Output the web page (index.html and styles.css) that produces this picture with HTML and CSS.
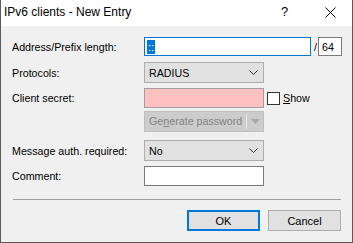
FILE: index.html
```html
<!DOCTYPE html>
<html lang="en">
<head>
    <meta charset="UTF-8">
    <title>IPv6 clients - New Entry</title>
    <link rel="stylesheet" href="styles.css">
</head>
<body>
    <div class="window">
        <div class="titlebar">
            <span class="title">IPv6 clients - New Entry</span>
            <span class="help">?</span>
            <span class="close">
                <svg width="11" height="11" viewBox="0 0 11 11"><path d="M0.5 0.5 L10.5 10.5 M10.5 0.5 L0.5 10.5" stroke="#000" stroke-width="1" fill="none"/></svg>
            </span>
        </div>

        <div class="content">
            <div class="row row-address">
                <label>Address/Prefix length:</label>
                <div class="controls">
                    <div class="textbox focused address"><span class="selected">::</span></div>
                    <span class="slash">/</span>
                    <div class="textbox prefix">64</div>
                </div>
            </div>

            <div class="row row-protocols">
                <label>Protocols:</label>
                <div class="controls">
                    <div class="combo">
                        <span>RADIUS</span>
                        <svg class="chevron" width="9" height="5" viewBox="0 0 9 5"><path d="M0.5 0.5 L4.5 4.5 L8.5 0.5" stroke="#333" fill="none"/></svg>
                    </div>
                </div>
            </div>

            <div class="row row-secret">
                <label>Client secret:</label>
                <div class="controls">
                    <div class="textbox secret"></div>
                    <span class="checkbox"></span>
                    <span class="check-label"><u>S</u>how</span>
                </div>
            </div>

            <div class="row row-generate">
                <span></span>
                <div class="controls">
                    <div class="splitbutton">
                        <span class="split-main">Ge<u>n</u>erate password</span>
                        <span class="split-arrow">
                            <svg width="9" height="6" viewBox="0 0 9 6"><path d="M0 0 L9 0 L4.5 5 Z" fill="#a8a8a8"/></svg>
                        </span>
                    </div>
                </div>
            </div>

            <div class="row row-auth">
                <label>Message auth. required:</label>
                <div class="controls">
                    <div class="combo">
                        <span>No</span>
                        <svg class="chevron" width="9" height="5" viewBox="0 0 9 5"><path d="M0.5 0.5 L4.5 4.5 L8.5 0.5" stroke="#333" fill="none"/></svg>
                    </div>
                </div>
            </div>

            <div class="row row-comment">
                <label>Comment:</label>
                <div class="controls">
                    <div class="textbox comment"></div>
                </div>
            </div>

            <div class="separator"></div>

            <div class="buttons">
                <button class="btn default">OK</button>
                <button class="btn">Cancel</button>
            </div>
        </div>
    </div>
</body>
</html>
```

FILE: styles.css
```css
html, body {
    margin: 0;
    padding: 0;
}
body {
    width: 353px;
    height: 243px;
    font-family: "Liberation Sans", Arial, sans-serif;
    font-size: 10.7px;
    color: #000;
    background: #f0f0f0;
}
.window {
    box-sizing: border-box;
    width: 353px;
    height: 243px;
    border: 1px solid #5a5a5a;
    border-top: none;
    background: #f0f0f0;
    display: flex;
    flex-direction: column;
}
.titlebar {
    height: 26px;
    background: #fff;
    display: flex;
    align-items: center;
    position: relative;
}
.title {
    font-size: 12px;
    margin-left: 3px;
    margin-top: -2px;
}
.help {
    position: absolute;
    left: 280px;
    top: 4px;
    font-size: 13px;
}
.close {
    position: absolute;
    left: 324px;
    top: 7px;
    line-height: 0;
}
.content {
    flex: 1;
    padding: 11px 0 0 11px;
}
.row {
    display: grid;
    grid-template-columns: 132px auto;
    align-items: center;
}
.controls {
    display: flex;
    align-items: center;
}
.row-address { height: 19px; }
.row-protocols { height: 21px; margin-top: 6px; }
.row-secret { height: 20px; margin-top: 5px; }
.row-generate { height: 21px; margin-top: 3px; }
.row-auth { height: 21px; margin-top: 8px; }
.row-comment { height: 20px; margin-top: 5px; }

.textbox {
    box-sizing: border-box;
    height: 19px;
    background: #fff;
    border: 1px solid #7a7a7a;
    display: flex;
    align-items: center;
    padding-left: 2px;
}
.textbox.focused {
    border-color: #0078d7;
}
.address {
    width: 167px;
}
.selected {
    background: #0078d7;
    color: #fff;
    padding: 0 1px;
    line-height: 14px;
}
.slash {
    margin: 0 1px 0 3px;
}
.prefix {
    width: 24px;
    padding-left: 3px;
}
.secret {
    width: 120px;
    height: 20px;
    background: #ffc0c0;
    border-color: #a0a0a0;
}
.comment {
    width: 120px;
    height: 20px;
}
.combo {
    box-sizing: border-box;
    width: 120px;
    height: 21px;
    background: #e1e1e1;
    border: 1px solid #adadad;
    display: flex;
    align-items: center;
    justify-content: space-between;
    padding: 0 5px 0 4px;
}
.checkbox {
    box-sizing: border-box;
    width: 13px;
    height: 13px;
    border: 1px solid #333;
    background: #fff;
    margin-left: 3px;
}
.check-label {
    margin-left: 3px;
}
.splitbutton {
    box-sizing: border-box;
    width: 120px;
    height: 21px;
    background: #cccccc;
    border: 1px solid #bfbfbf;
    color: #838383;
    display: flex;
    align-items: center;
}
.split-main {
    flex: 1;
    padding-left: 4px;
    border-right: 1px solid #e8e8e8;
    line-height: 15px;
}
.split-arrow {
    width: 16px;
    display: flex;
    justify-content: center;
}
.separator {
    height: 1px;
    background: #a0a0a0;
    margin: 13px 11px 0 1px;
}
.buttons {
    display: flex;
    justify-content: flex-end;
    gap: 8px;
    margin: 10px 11px 0 0;
}
.btn {
    box-sizing: border-box;
    width: 73px;
    height: 21px;
    background: #e1e1e1;
    border: 1px solid #adadad;
    font-family: "Liberation Sans", Arial, sans-serif;
    font-size: 11px;
    color: #000;
    padding: 0;
}
.btn.default {
    border: 2px solid #0078d7;
}
```
